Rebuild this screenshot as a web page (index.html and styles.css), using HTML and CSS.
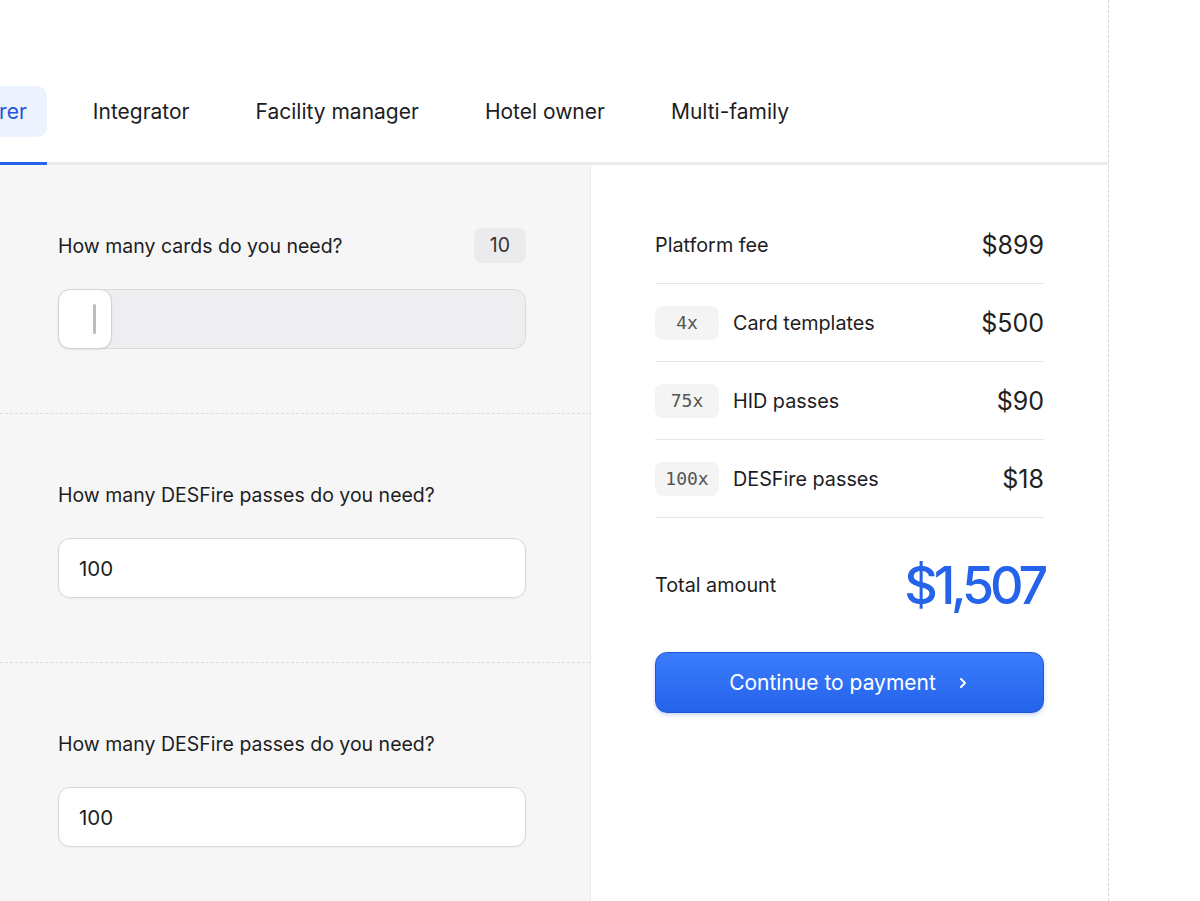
FILE: index.html
```html
<!DOCTYPE html>
<html lang="en">
<head>
    <meta charset="UTF-8">
    <meta name="viewport" content="width=device-width, initial-scale=1.0">
    <title>Pricing calculator</title>
    <link rel="stylesheet" href="styles.css">
</head>
<body>
    <div class="frame">
        <nav class="tabs">
            <a class="tab active" href="#"><span>Manufacturer</span></a>
            <a class="tab" href="#"><span>Integrator</span></a>
            <a class="tab" href="#"><span>Facility manager</span></a>
            <a class="tab" href="#"><span>Hotel owner</span></a>
            <a class="tab" href="#"><span>Multi-family</span></a>
        </nav>

        <div class="calc">
            <div class="inputs">
                <div class="field">
                    <div class="field-head">
                        <label>How many cards do you need?</label>
                        <span class="count">10</span>
                    </div>
                    <div class="slider">
                        <div class="thumb"><i></i></div>
                    </div>
                </div>

                <div class="field">
                    <div class="field-head">
                        <label>How many DESFire passes do you need?</label>
                    </div>
                    <input class="text-input" type="text" value="100">
                </div>

                <div class="field">
                    <div class="field-head">
                        <label>How many DESFire passes do you need?</label>
                    </div>
                    <input class="text-input" type="text" value="100">
                </div>
            </div>

            <div class="summary">
                <div class="line">
                    <span class="name">Platform fee</span>
                    <span class="price">$899</span>
                </div>
                <div class="line">
                    <span class="qty">4x</span>
                    <span class="name">Card templates</span>
                    <span class="price">$500</span>
                </div>
                <div class="line">
                    <span class="qty">75x</span>
                    <span class="name">HID passes</span>
                    <span class="price">$90</span>
                </div>
                <div class="line">
                    <span class="qty">100x</span>
                    <span class="name">DESFire passes</span>
                    <span class="price">$18</span>
                </div>

                <div class="total">
                    <span class="name">Total amount</span>
                    <span class="total-price">$1,507</span>
                </div>

                <button class="pay">
                    Continue to payment
                    <svg width="14" height="14" viewBox="0 0 14 14" fill="none">
                        <path d="M5 3l4 4-4 4" stroke="#fff" stroke-width="2" stroke-linecap="round" stroke-linejoin="round"/>
                    </svg>
                </button>
            </div>
        </div>
    </div>
</body>
</html>
```

FILE: styles.css
```css
* { box-sizing: border-box; }
html, body { margin: 0; padding: 0; background: #fff; overflow: hidden; }
body { font-family: Inter, "Noto Sans", sans-serif; color: #1d1d1f; height: 901px; }

.frame { width: 1109px; height: 901px; border-right: 1px dashed #d4d4d4; padding-top: 86px; }

/* tab strip */
.tabs { display: flex; gap: 26px; border-bottom: 3px solid #ececec; margin-left: -127px; }
.tab { display: flex; flex-direction: column; text-decoration: none; color: #1d1d1f; font-size: 21px; margin-bottom: -3px; border-bottom: 3px solid transparent; }
.tab span { display: flex; align-items: center; height: 51px; padding: 0 20px; border-radius: 10px; margin-bottom: 25px; }
.tab.active { border-bottom-color: #2563eb; }
.tab.active span { background: #edf3fe; color: #2456d6; }

.calc { display: flex; height: 740px; }

/* left column with inputs */
.inputs { width: 591px; background: #f6f6f6; border-right: 1px solid #ebebeb; }
.field { padding: 63px 64px 64px 58px; border-bottom: 1px dashed #dcdcdc; }
.field:last-child { border-bottom: none; }
.field-head { display: flex; justify-content: space-between; align-items: center; min-height: 35px; margin-bottom: 26px; }
.field-head label { font-size: 19.5px; }
.count { background: #ebebed; border-radius: 8px; padding: 0 16px; height: 35px; line-height: 35px; font-size: 19.5px; color: #333; }

.slider { height: 60px; background: #eeeef0; border: 1px solid #dadadc; border-radius: 12px; }
.thumb { width: 54px; height: 60px; margin: -1px 0 0 -1px; background: #fff; border: 1px solid #d2d2d4; border-radius: 12px; display: flex; justify-content: flex-end; align-items: center; padding-right: 15px; box-shadow: 0 1px 2px rgba(0, 0, 0, 0.08); }
.thumb i { width: 3px; height: 30px; background: #bcbcc0; border-radius: 2px; }

.text-input { display: block; width: 100%; height: 60px; border: 1px solid #d8d8d8; border-radius: 12px; background: #fff; padding: 0 20px; font-family: inherit; font-size: 20.5px; color: #1d1d1f; box-shadow: 0 1px 2px rgba(0, 0, 0, 0.05); }

/* right column with the price breakdown */
.summary { flex: 1; padding: 41px 64px 0 64px; }
.line { display: flex; align-items: center; height: 78px; border-bottom: 1px solid #e6e6e6; }
.name { font-size: 19.8px; }
.qty { width: 64px; height: 34px; line-height: 34px; text-align: center; background: #f4f4f4; border-radius: 8px; font-family: "DejaVu Sans Mono", monospace; font-size: 18px; color: #555; margin-right: 14px; }
.price { margin-left: auto; font-size: 25px; color: #222; }

.total { display: flex; align-items: center; justify-content: space-between; height: 60px; margin: 37px 0; }
.total-price { font-size: 52px; font-weight: 500; letter-spacing: -0.08em; color: #2563eb; }

.pay { width: 100%; height: 61px; border: 1px solid #1f55d6; border-radius: 12px; background: linear-gradient(#3a7cfb, #2563eb); color: #fff; font-family: inherit; font-size: 21px; display: flex; align-items: center; justify-content: center; gap: 20px; box-shadow: 0 2px 4px rgba(37, 99, 235, 0.25); cursor: pointer; }
```
